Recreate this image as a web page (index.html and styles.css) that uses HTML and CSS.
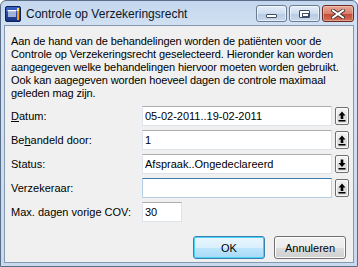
FILE: index.html
```html
<!DOCTYPE html>
<html>
<head>
<meta charset="utf-8">
<link rel="stylesheet" href="styles.css">
</head>
<body>
<div class="window">
  <div class="titlebar">
    <svg class="appicon" width="16" height="16" viewBox="0 0 16 16">
      <defs>
        <linearGradient id="ig" x1="0" y1="0" x2="0" y2="1">
          <stop offset="0" stop-color="#3a64c8"/>
          <stop offset="1" stop-color="#16307e"/>
        </linearGradient>
      </defs>
      <rect x="0.5" y="0.5" width="15" height="15" rx="1.5" fill="url(#ig)" stroke="#0e2157"/>
      <rect x="3" y="5" width="8" height="6" fill="#e8ecf6"/>
      <path d="M4 5v6M6 5v6M8 5v6M10 5v6" stroke="#3a5aa8" stroke-width="0.8"/>
      <rect x="2.5" y="4" width="9" height="1.2" fill="#ffffff"/>
      <rect x="12" y="2" width="2" height="12" fill="#f0a020"/>
      <rect x="12" y="2" width="2" height="3" fill="#ffe060"/>
    </svg>
    <span class="title">Controle op Verzekeringsrecht</span>
    <div class="caption-buttons">
      <div class="cbtn cmin"><span class="minbar"></span></div>
      <div class="cbtn cmax"><span class="maxbox"></span></div>
      <div class="cbtn cclose">
        <svg width="14" height="10" viewBox="0 0 14 10">
          <path d="M2 1.5 L12 8.5 M12 1.5 L2 8.5" stroke="#3a2a2a" stroke-width="3.6" stroke-linecap="square"/>
          <path d="M2 1.5 L12 8.5 M12 1.5 L2 8.5" stroke="#ffffff" stroke-width="2" stroke-linecap="square"/>
        </svg>
      </div>
    </div>
  </div>
  <div class="client">
    <p class="intro">Aan de hand van de behandelingen worden de patiënten voor de<br>Controle op Verzekeringsrecht geselecteerd. Hieronder kan worden<br>aangegeven welke behandelingen hiervoor moeten worden gebruikt.<br>Ook kan aagegeven worden hoeveel dagen de controle maximaal<br>geleden mag zijn.</p>
    <div class="form">
      <label class="lbl"><u>D</u>atum:</label>
      <input class="field" type="text" value="05-02-2011..19-02-2011">
      <div class="spin"><svg width="8" height="11" viewBox="0 0 8 11"><path d="M4 0.5 L7.5 4.5 H5.3 V8 H2.7 V4.5 H0.5 Z" fill="#000"/><rect x="0.5" y="9" width="7" height="1.5" fill="#000"/></svg></div>

      <label class="lbl">Be<u>h</u>andeld door:</label>
      <input class="field" type="text" value="1">
      <div class="spin"><svg width="8" height="11" viewBox="0 0 8 11"><path d="M4 0.5 L7.5 4.5 H5.3 V8 H2.7 V4.5 H0.5 Z" fill="#000"/><rect x="0.5" y="9" width="7" height="1.5" fill="#000"/></svg></div>

      <label class="lbl">Status:</label>
      <input class="field" type="text" value="Afspraak..Ongedeclareerd">
      <div class="spin"><svg width="8" height="11" viewBox="0 0 8 11"><path d="M4 8 L7.5 4 H5.3 V0.5 H2.7 V4 H0.5 Z" fill="#000"/><rect x="0.5" y="9" width="7" height="1.5" fill="#000"/></svg></div>

      <label class="lbl">Verzekeraar:</label>
      <input class="field focus" type="text" value="">
      <div class="spin"><svg width="8" height="11" viewBox="0 0 8 11"><path d="M4 0.5 L7.5 4.5 H5.3 V8 H2.7 V4.5 H0.5 Z" fill="#000"/><rect x="0.5" y="9" width="7" height="1.5" fill="#000"/></svg></div>

      <label class="lbl">Max. dagen vorige COV:</label>
      <input class="field short" type="text" value="30">
      <div></div>
    </div>
    <div class="actions">
      <button class="btn default">OK</button>
      <button class="btn">Annuleren</button>
    </div>
  </div>
</div>
</body>
</html>
```

FILE: styles.css
```css
* { box-sizing: border-box; }
html, body { margin: 0; padding: 0; background: #ffffff; }
body { font-family: "Liberation Sans", Arial, sans-serif; font-size: 11px; color: #000; }

.window {
  width: 358px;
  height: 267px;
  display: flex;
  flex-direction: column;
  background: linear-gradient(#c4d7ee, #d4e2f3 30px, #c9daef);
  border: 1px solid #5a6e88;
  border-radius: 6px 6px 0 0;
  padding: 0 3px 3px 3px;
}

.titlebar {
  height: 24px;
  display: flex;
  align-items: center;
  padding-left: 1px;
  flex: none;
}
.appicon { flex: none; margin-top: 1px; }
.title {
  font-size: 12px;
  margin-left: 5px;
  color: #0b1628;
  flex: 1;
  margin-top: 1px;
  font-family: "Liberation Sans", Arial, sans-serif;
}
.caption-buttons {
  display: flex;
  gap: 2px;
  align-self: flex-start;
  margin-top: 4px;
  margin-right: 0;
}
.cbtn {
  width: 31px;
  height: 17px;
  border: 1px solid #6a7c94;
  border-radius: 3px;
  display: flex;
  align-items: center;
  justify-content: center;
  background: linear-gradient(#e6eef8, #cddcee 50%, #b8cbe4 51%, #c8d8ec);
  box-shadow: inset 0 0 0 1px rgba(255,255,255,0.55);
}
.cclose {
  width: 32px;
  border-color: #6b2b20;
  background: linear-gradient(#e8a898, #d8806c 50%, #c24a34 51%, #d0705a);
  box-shadow: inset 0 0 0 1px rgba(255,220,210,0.45);
}
.minbar {
  width: 11px; height: 4px;
  border: 1px solid #3c4c62;
  background: #fff;
  border-radius: 1px;
  margin-top: 4px;
}
.maxbox {
  width: 11px; height: 8px;
  border: 1px solid #3c4c62;
  background: #fff;
  position: relative;
  border-radius: 1px;
}
.maxbox::after {
  content: "";
  position: absolute;
  left: 2px; top: 2px;
  width: 5px; height: 2px;
  border: 1px solid #3c4c62;
}

.client {
  flex: 1;
  background: #f0f0f0;
  border: 1px solid #8498b2;
  display: flex;
  flex-direction: column;
  padding: 9px 6px 0 6px;
}

.intro {
  margin: 0;
  line-height: 13px;
  letter-spacing: -0.1px;
  white-space: nowrap;
}

.form {
  display: grid;
  grid-template-columns: 128px 190px 14px;
  column-gap: 3px;
  row-gap: 4px;
  margin-top: 6px;
  align-items: center;
}
.lbl { line-height: 20px; }
.field {
  height: 20px;
  width: 190px;
  border: 1px solid #dde3ea;
  border-top-color: #abadb3;
  background: #fff;
  font-family: "Liberation Sans", Arial, sans-serif;
  font-size: 11px;
  padding: 0 2px;
  margin: 0;
  outline: none;
  color: #000;
}
.field.focus {
  border-color: #b5cfe7;
  border-top-color: #3d7bad;
}
.field.short { width: 40px; }
.spin {
  width: 14px;
  height: 18px;
  border: 1px solid #707070;
  border-radius: 2px;
  background: linear-gradient(#f4f4f4, #e6e6e6 50%, #d8d8d8 51%, #e2e2e2);
  display: flex;
  align-items: center;
  justify-content: center;
  box-shadow: inset 0 0 0 1px #fbfbfb;
}

.actions {
  margin-top: auto;
  margin-bottom: 3px;
  display: flex;
  justify-content: flex-end;
  gap: 9px;
  padding-right: 1px;
}
.btn {
  width: 72px;
  height: 23px;
  font-family: "Liberation Sans", Arial, sans-serif;
  font-size: 11px;
  color: #000;
  border: 1px solid #707070;
  border-radius: 3px;
  background: linear-gradient(#f2f2f2, #ebebeb 50%, #dddddd 51%, #cfcfcf);
  box-shadow: inset 0 0 0 1px #fcfcfc;
  padding: 0;
  margin: 0;
}
.btn.default {
  border-color: #3c7fb1;
  background: linear-gradient(#eaf6fd, #d9f0fc 50%, #bee6fd 51%, #a7d9f5);
  box-shadow: inset 0 0 0 1px #48d2f6;
}
```
